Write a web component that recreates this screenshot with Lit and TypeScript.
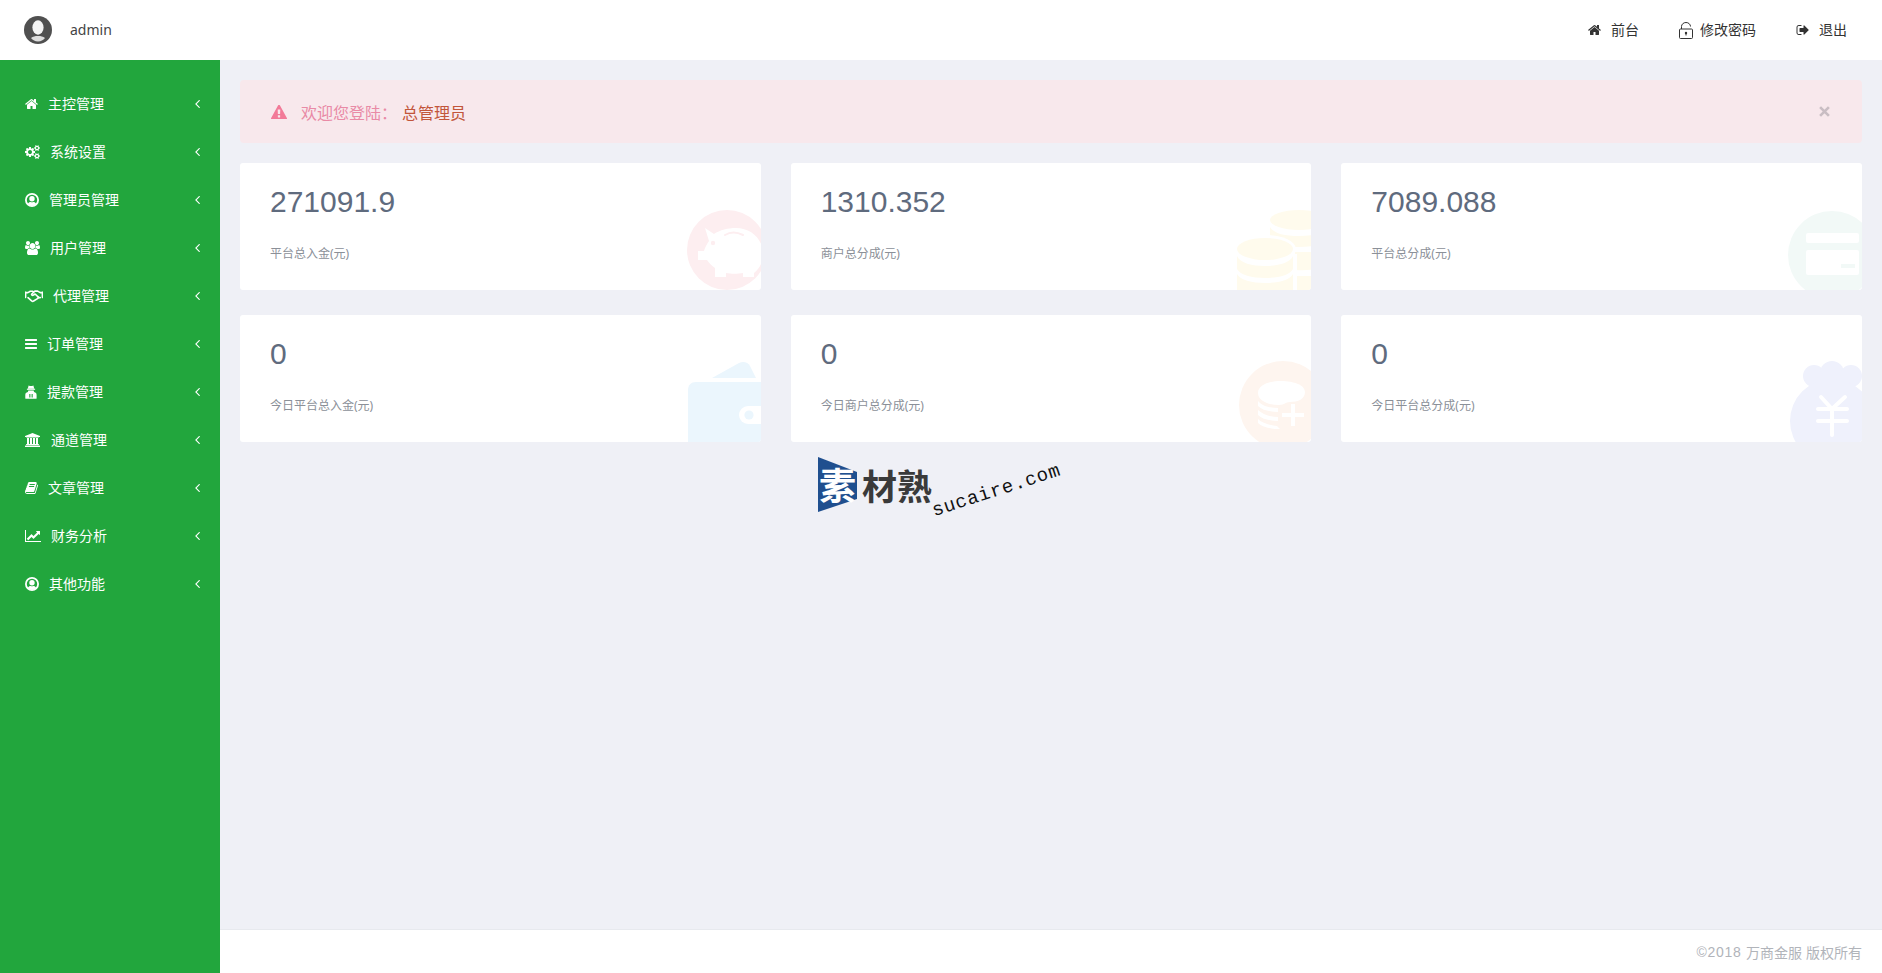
import { LitElement, html, css, svg } from "lit";
import { customElement } from "lit/decorators.js";

const P = {
  home: "M1472 992v480q0 26-19 45t-45 19h-384v-384h-256v384h-384q-26 0-45-19t-19-45v-480q0-1 .5-3t.5-3l575-474 575 474q1 2 1 6zm223-69l-62 74q-8 9-21 11h-3q-13 0-21-7l-692-577-692 577q-12 8-24 7-13-2-21-11l-62-74q-8-10-7-23.5t11-21.5l719-599q32-26 76-26t76 26l244 204v-195q0-14 9-23t23-9h192q14 0 23 9t9 23v408l219 182q10 8 11 21.5t-7 23.5z",
  cogs: "M896 896q0-106-75-181t-181-75-181 75-75 181 75 181 181 75 181-75 75-181zm768 512q0-52-38-90t-90-38-90 38-38 90q0 53 37.5 90.5t90.5 37.5 90.5-37.5 37.5-90.5zm0-1024q0-52-38-90t-90-38-90 38-38 90q0 53 37.5 90.5t90.5 37.5 90.5-37.5 37.5-90.5zm-384 421v185q0 10-7 19.5t-16 10.5l-155 24q-11 35-32 76 34 48 90 115 7 11 7 20 0 12-7 19-23 30-82.5 89.5t-78.5 59.5q-11 0-21-7l-115-90q-37 19-77 31-11 108-23 155-7 24-30 24h-186q-11 0-20-7.5t-10-17.5l-23-153q-34-10-75-31l-118 89q-7 7-20 7-11 0-21-8-144-133-144-160 0-9 7-19 10-14 41-53t47-61q-23-44-35-82l-152-24q-10-1-17-9.5t-7-19.5v-185q0-10 7-19.5t16-10.5l155-24q11-35 32-76-34-48-90-115-7-11-7-20 0-12 7-20 22-30 82-89t79-59q11 0 21 7l115 90q34-18 77-32 11-108 23-154 7-24 30-24h186q11 0 20 7.5t10 17.5l23 153q34 10 75 31l118-89q8-7 20-7 11 0 21 8 144 133 144 160 0 8-7 19-12 16-42 54t-45 60q23 48 34 82l152 23q10 2 17 10.5t7 19.5zm640 533v140q0 16-149 31-12 27-30 52 51 113 51 138 0 4-4 7-122 71-124 71-8 0-46-47t-52-68q-20 2-30 2t-30-2q-14 21-52 68t-46 47q-2 0-124-71-4-3-4-7 0-25 51-138-18-25-30-52-149-15-149-31v-140q0-16 149-31 13-29 30-52-51-113-51-138 0-4 4-7 4-2 35-20t59-34 30-16q8 0 46 46.5t52 67.5q20-2 30-2t30 2q51-71 92-112l6-2q4 0 124 70 4 3 4 7 0 25-51 138 17 23 30 52 149 15 149 31zm0-1024v140q0 16-149 31-12 27-30 52 51 113 51 138 0 4-4 7-122 71-124 71-8 0-46-47t-52-68q-20 2-30 2t-30-2q-14 21-52 68t-46 47q-2 0-124-71-4-3-4-7 0-25 51-138-18-25-30-52-149-15-149-31v-140q0-16 149-31 13-29 30-52-51-113-51-138 0-4 4-7 4-2 35-20t59-34 30-16q8 0 46 46.5t52 67.5q20-2 30-2t30 2q51-71 92-112l6-2q4 0 124 70 4 3 4 7 0 25-51 138 17 23 30 52 149 15 149 31z",
  users: "M593 896q-162 5-265 128h-134q-82 0-138-40.5t-56-118.5q0-353 124-353 6 0 43.5 21t97.5 42.5 119 21.5q67 0 133-23-5 37-5 66 0 139 81 256zm1071 637q0 120-73 189.5t-194 69.5h-874q-121 0-194-69.5t-73-189.5q0-53 3.5-103.5t14-109 26.5-108.5 43-97.5 62-81 85.5-53.5 111.5-20q10 0 43 21.5t73 48 107 48 135 21.5 135-21.5 107-48 73-48 43-21.5q61 0 111.5 20t85.5 53.5 62 81 43 97.5 26.5 108.5 14 109 3.5 103.5zm-1024-1277q0 106-75 181t-181 75-181-75-75-181 75-181 181-75 181 75 75 181zm704 384q0 159-112.5 271.5t-271.5 112.5-271.5-112.5-112.5-271.5 112.5-271.5 271.5-112.5 271.5 112.5 112.5 271.5zm576 225q0 78-56 118.5t-138 40.5h-134q-103-123-265-128 81-117 81-256 0-29-5-66 66 23 133 23 59 0 119-21.5t97.5-42.5 43.5-21q124 0 124 353zm-128-609q0 106-75 181t-181 75-181-75-75-181 75-181 181-75 181 75 75 181z",
  bars: "M1664 1344v128q0 26-19 45t-45 19h-1408q-26 0-45-19t-19-45v-128q0-26 19-45t45-19h1408q26 0 45 19t19 45zm0-512v128q0 26-19 45t-45 19h-1408q-26 0-45-19t-19-45v-128q0-26 19-45t45-19h1408q26 0 45 19t19 45zm0-512v128q0 26-19 45t-45 19h-1408q-26 0-45-19t-19-45v-128q0-26 19-45t45-19h1408q26 0 45 19t19 45z",
  bank: "M960 0l960 384v128h-128q0 26-20.5 45t-48.5 19h-1526q-28 0-48.5-19t-20.5-45h-128v-128zm-704 640h256v768h128v-768h256v768h128v-768h256v768h128v-768h256v768h59q28 0 48.5 19t20.5 45v64h-1664v-64q0-26 20.5-45t48.5-19h59v-768zm1595 960q28 0 48.5 19t20.5 45v128h-1920v-128q0-26 20.5-45t48.5-19h1782z",
  book: "M1639 478q40 57 18 129l-275 906q-19 64-76.5 107.5t-122.5 43.5h-923q-77 0-148.5-53.5t-99.5-131.5q-24-67-2-127 0-4 3-27t4-37q1-8-3-21.5t-3-19.5q2-11 8-21t16.5-23.5 16.5-23.5q23-38 45-91.5t30-91.5q3-10 .5-30t-.5-28q3-11 17-28t17-23q21-36 42-92t25-90q1-9-2.5-32t.5-28q4-13 22-30.5t22-22.5q19-26 42.5-84.5t27.5-96.5q1-8-3-25.5t-2-26.5q2-8 9-18t18-23 17-21q8-12 16.5-30.5t15-35 16-36 19.5-32 26.5-23.5 36-11.5 47.5 5.5l-1 3q38-9 51-9h761q74 0 114 56t18 130l-274 906q-36 119-71.5 153.5t-128.5 34.5h-869q-27 0-38 15-11 16-1 43 24 70 144 70h923q29 0 56-15.5t35-41.5l300-987q7-22 5-57 38 15 59 43zm-1064 2q-4 13 2 22.5t20 9.5h608q13 0 25.5-9.5t16.5-22.5l21-64q4-13-2-22.5t-20-9.5h-608q-13 0-25.5 9.5t-16.5 22.5zm-83 256q-4 13 2 22.5t20 9.5h608q13 0 25.5-9.5t16.5-22.5l21-64q4-13-2-22.5t-20-9.5h-608q-13 0-25.5 9.5t-16.5 22.5z",
  chart: "M2048 1536v128h-2048v-1536h128v1408h1920zm-128-1248v435q0 21-19.5 29.5t-35.5-7.5l-121-121-633 633q-10 10-23 10t-23-10l-233-233-416 416-192-192 585-585q10-10 23-10t23 10l233 233 464-464-121-121q-16-16-7.5-35.5t29.5-19.5h435q14 0 23 9t9 23z",
  warning: "M1024 1375v-190q0-14-9.5-23.5t-22.5-9.5h-192q-13 0-22.5 9.5t-9.5 23.5v190q0 14 9.5 23.5t22.5 9.5h192q13 0 22.5-9.5t9.5-23.5zm-2-374l18-459q0-12-10-19-13-11-24-11h-220q-11 0-24 11-10 7-10 21l17 457q0 10 10 16.5t24 6.5h185q14 0 23.5-6.5t10.5-16.5zm-14-934l768 1408q35 63-2 126-17 29-46.5 46t-63.5 17h-1536q-34 0-63.5-17t-46.5-46q-37-63-2-126l768-1408q17-31 47-49t65-18 65 18 47 49z",
  signOut: "M704 1440q0 4 1 20t.5 26.5-3 23.5-10 19.5-20.5 6.5h-320q-119 0-203.5-84.5t-84.5-203.5v-704q0-119 84.5-203.5t203.5-84.5h320q13 0 22.5 9.5t9.5 22.5q0 4 1 20t.5 26.5-3 23.5-10 19.5-20.5 6.5h-320q-66 0-113 47t-47 113v704q0 66 47 113t113 47h312l11.5 1 11.5 3 8 5.5 7 9 2 13.5zm928-544q0 26-19 45l-544 544q-19 19-45 19t-45-19-19-45v-288h-448q-26 0-45-19t-19-45v-384q0-26 19-45t45-19h448v-288q0-26 19-45t45-19 45 19l544 544q19 19 19 45z",
  angle: "M1203 544q0 13-10 23l-393 393 393 393q10 10 10 23t-10 23l-50 50q-10 10-23 10t-23-10l-466-466q-10-10-10-23t10-23l466-466q10-10 23-10t23 10l50 50q10 10 10 23z",
};

const fa = (d: string, vb: string, w: number, h = 14) =>
  html`<svg class="ic" width=${w} height=${h} viewBox=${vb} fill="currentColor"><path d=${d}></path></svg>`;

const userCircle = html`<svg class="ic" width="14" height="14" viewBox="0 0 14 14" fill="currentColor">
  <circle cx="7" cy="7" r="6.1" fill="none" stroke="currentColor" stroke-width="1.8"></circle>
  <circle cx="7" cy="5.7" r="2.7"></circle>
  <path d="M2.600 11.200c.8-1.700 2-2.300 2.900-2.300.5.300 1 .4 1.500.4s1-.1 1.500-.4c.9 0 2.100.6 2.900 2.300L7 13z"></path>
</svg>`;

const handshake = html`<svg class="ic" width="18" height="14" viewBox="0 0 18 14" fill="none" stroke="currentColor" stroke-width="1.6" stroke-linejoin="round" stroke-linecap="round">
  <path d="M.4 3.600h2.500l2.400-1.400h2.200l1.200.8M17.600 3.600h-2.400l-2.500-1.500H9.900L6.800 5c-.7.8.6 1.800 1.500 1.200l1.800-1.200 3.800 3.600h1.400"></path>
  <path d="M3 8.700l3.600 3.200c.8.6 1.500.5 2 .1l4.300-2.600c.9-.7.3-1.600-.3-1.600"></path>
  <path d="M.4 3.600v4.600M17.600 3.600v4.600" stroke-width="2"></path>
</svg>`;

const secret = html`<svg class="ic" width="12" height="14" viewBox="0 0 12 14" fill="currentColor">
  <path d="M3.600 .6l1.300.5h2.200l1.300-.5.8 3.200H2.800z"></path>
  <rect x="1.900" y="3.700" width="8.200" height="1.100"></rect>
  <path d="M3.300 5.400h5.400l.3 1.600c1.800.4 2.600 1.300 2.600 3v3.200c0 .4-.3.6-.6.6H.9c-.3 0-.6-.2-.6-.6V10c0-1.700.8-2.600 2.600-3z"></path>
  <rect x="4.300" y="9" width="1.100" height="3.500" fill="#22a63d"></rect>
  <rect x="6.600" y="9" width="1.100" height="3.500" fill="#22a63d"></rect>
</svg>`;

const MENU = [
  { icon: fa(P.home, "64 0 1664 1792", 13), label: "主控管理" },
  { icon: fa(P.cogs, "0 0 1920 1792", 15), label: "系统设置" },
  { icon: userCircle, label: "管理员管理" },
  { icon: fa(P.users, "0 0 1920 1792", 15), label: "用户管理" },
  { icon: handshake, label: "代理管理" },
  { icon: fa(P.bars, "128 0 1536 1792", 12), label: "订单管理" },
  { icon: secret, label: "提款管理" },
  { icon: fa(P.bank, "0 0 2048 1792", 16), label: "通道管理" },
  { icon: fa(P.book, "0 0 1664 1792", 13), label: "文章管理" },
  { icon: fa(P.chart, "0 0 2048 1792", 16), label: "财务分析" },
  { icon: userCircle, label: "其他功能" },
];

const pig = svg`<circle cx="46" cy="40" r="40" fill="#fdeef0"></circle>
  <path fill="#fff" d="M24 18l9 6c6-4 14-6 22-6 15 0 27 11 27 26 0 8-3 14-9 19v4H62v-4c-5 1-12 1-17 0v4H34v-9c-4-3-6-5-8-8h-9V41h6c1-4 3-7 5-10z"></path>
  <circle cx="32" cy="33" r="2.200" fill="#fdeef0"></circle>
  <path d="M44 25c5-3 12-3 18 0" stroke="#fdeef0" stroke-width="2" fill="none" stroke-linecap="round"></path>`;

const coins = svg`<g fill="#fffbed">
  <ellipse cx="68" cy="10" rx="29" ry="10"></ellipse>
  <path d="M39 17c4 7 16 9 29 9s25-2 29-9v12c-4 6-16 8-29 8s-25-2-29-8z"></path>
  <path d="M64 42h33v13c-4 4-20 6-33 5zM64 66h33v14H64z"></path>
  </g>
  <ellipse cx="34" cy="39" rx="31" ry="14" fill="#fff"></ellipse>
  <path d="M62 44h4v36h-4z" fill="#fff"></path>
  <g fill="#fffbed">
  <ellipse cx="34" cy="39" rx="28" ry="11"></ellipse>
  <path d="M6 46c3 7 15 10 28 10s25-3 28-10v13c-3 6-15 9-28 9s-25-3-28-9z"></path>
  <path d="M6 64c3 6 15 9 28 9s25-3 28-9v16H6z"></path>
  </g>`;

const card = svg`<circle cx="50" cy="45" r="44" fill="#f2f9f7"></circle>
  <rect x="24" y="23" width="53" height="10" rx="2" fill="#fff"></rect>
  <rect x="24" y="40" width="53" height="25" rx="2" fill="#fff"></rect>
  <rect x="59" y="54" width="14" height="4" fill="#f2f9f7"></rect>`;

const wallet = svg`<path d="M31 16L58 1c4-2 9-1 11 3l6 12z" fill="#ebf6fd"></path>
  <path d="M7 28c0-5 3-8 8-8h65v60H7z" fill="#ebf6fd"></path>
  <path d="M80 44H67a9 9 0 0 0 0 18h13z" fill="#fff"></path>
  <circle cx="68" cy="53" r="4.600" fill="#ebf6fd"></circle>`;

const stack = svg`<circle cx="52" cy="44" r="44" fill="#fef5ef"></circle>
  <path fill="#fff" d="M50 20c13 0 24 4 24 11s-7 10-15 10c-5 0-5 3-11 3-12 0-21-5-21-12 0-8 11-12 23-12z"></path>
  <path fill="#fff" d="M27 40c4 5 12 7 20 7v4c-8 0-16-2-20-6zM27 49c4 4 12 7 20 7v4c-8 0-16-2-20-6zM27 58c4 4 11 6 19 7l3 3c-9 0-18-2-22-6z"></path>
  <path d="M51 54h22M62 43v22" stroke="#fff" stroke-width="4"></path>`;

const bag = svg`<g fill="#eff1fc"><circle cx="32" cy="15" r="11"></circle><circle cx="50" cy="12" r="12"></circle><circle cx="69" cy="15" r="11"></circle>
  <path d="M36 24h30v6H36z"></path><circle cx="50" cy="60" r="42"></circle></g>
  <path d="M39 36l11 12 13-12M36 48h29M36 60h29M50 48v26" stroke="#fff" stroke-width="4" fill="none" stroke-linecap="round"></path>`;

const STATS = [
  { v: "271091.9", l: "平台总入金(元)", a: pig, h: 80 },
  { v: "1310.352", l: "商户总分成(元)", a: coins, h: 80 },
  { v: "7089.088", l: "平台总分成(元)", a: card, h: 80 },
  { v: "0", l: "今日平台总入金(元)", a: wallet, h: 80 },
  { v: "0", l: "今日商户总分成(元)", a: stack, h: 81 },
  { v: "0", l: "今日平台总分成(元)", a: bag, h: 81 },
];

@customElement("app-root")
export class AppRoot extends LitElement {
  static styles = css`
    :host {
      display: flex;
      flex-direction: column;
      min-height: 100vh;
      background: #eff0f6;
      font-family: "Noto Sans", "Noto Sans CJK SC", "Liberation Sans", sans-serif;
      font-size: 14px;
      color: #333;
    }
    .ic { flex: none; display: block; }
    .up { padding-bottom: 2px; }
    .top {
      height: 60px;
      background: #fff;
      display: flex;
      align-items: center;
      padding: 0 35px 0 24px;
    }
    .avatar { display: block; flex: none; }
    .name { margin-left: 18px; color: #444; }
    .links { margin-left: auto; display: flex; align-items: center; gap: 40px; }
    .link { display: flex; align-items: center; gap: 10px; color: #333; }
    .link .lock { margin-right: -3px; }
    .body { flex: 1; display: flex; }
    .side {
      width: 220px;
      flex: none;
      background: #22a63d;
      color: #fff;
      padding-top: 20px;
    }
    .item {
      height: 48px;
      display: flex;
      align-items: center;
      gap: 10px;
      padding: 0 20px 0 25px;
    }
    .item .chev { margin-left: auto; }
    .main { flex: 1; display: flex; flex-direction: column; position: relative; min-width: 0; }
    .content { flex: 1; padding: 20px 20px 0; }
    .alert {
      height: 63px;
      background: #f8e8ec;
      border-radius: 4px;
      display: flex;
      align-items: center;
      padding: 0 32px 0 31px;
      font-size: 16px;
      color: #e98aa6;
      margin-bottom: 20px;
    }
    .alert .warn { color: #f27a98; margin-right: 14px; }
    .alert b { font-weight: 400; color: #c2553a; margin-left: 5px; }
    .alert .x { margin-left: auto; }
    .grid {
      display: grid;
      grid-template-columns: repeat(3, 1fr);
      gap: 25px 30px;
    }
    .card {
      height: 127px;
      background: #fff;
      border-radius: 3px;
      padding: 22px 30px 0;
      box-sizing: border-box;
      position: relative;
      overflow: hidden;
    }
    .num {
      font-family: "Liberation Sans", Arial, sans-serif;
      font-size: 30px;
      line-height: 34px;
      color: #5f6b7e;
    }
    .lab {
      margin-top: 26px;
      font-size: 12px;
      line-height: 18px;
      color: #8b9098;
    }
    .art { position: absolute; right: 0; bottom: 0; display: block; }
    .foot {
      height: 43px;
      flex: none;
      background: #fff;
      border-top: 1px solid #e7e9ee;
      display: flex;
      align-items: center;
      justify-content: flex-end;
      padding: 0 20px;
      color: #b1b4ba;
      font-family: "Liberation Sans", "Noto Sans CJK SC", sans-serif;
      white-space: pre;
    }
    .yr { letter-spacing: 0.7px; }
    .wm { position: absolute; left: 598px; top: 397px; display: flex; align-items: center; }
    .mark { position: relative; width: 39px; height: 55px; }
    .mark svg { position: absolute; inset: 0; display: block; }
    .mark span {
      position: absolute;
      left: 1px;
      top: 4px;
      font: 700 37px/46px "Noto Sans CJK SC", sans-serif;
      color: #fff;
    }
    .wt { margin-left: 5px; font: 700 35px/40px "Noto Sans CJK SC", sans-serif; color: #3a3a3a; }
    .url {
      position: absolute;
      left: 118px;
      top: 43px;
      font: 400 19px/22px "Liberation Mono", monospace;
      letter-spacing: 0.8px;
      color: #111;
      transform: rotate(-18deg);
      transform-origin: left bottom;
      white-space: nowrap;
    }
  `;

  render() {
    return html`
      <div class="top">
        <svg class="avatar" width="28" height="28" viewBox="0 0 28 28">
          <circle cx="14" cy="14" r="14" fill="#505050"></circle>
          <ellipse cx="14" cy="11.500" rx="5.600" ry="7.200" fill="#f4f4f4"></ellipse>
          <path d="M7 22c2-1.600 4-2 7-2s5 .4 7 2c-1.800 2.200-4 3.400-7 3.400S8.800 24.200 7 22z" fill="#ddd"></path>
        </svg>
        <span class="name up">admin</span>
        <div class="links">
          <div class="link">${fa(P.home, "64 0 1664 1792", 13)}<span class="up">前台</span></div>
          <div class="link">
            <svg class="ic lock" width="14" height="17" viewBox="0 0 14 17" fill="none" stroke="currentColor" stroke-width="1">
              <rect x=".5" y="7" width="13" height="9.500" rx="1"></rect>
              <path d="M2.500 7V4.500a4.500 4 0 0 1 9 0"></path>
              <circle cx="7" cy="11" r="1.200" fill="currentColor" stroke="none"></circle>
              <path d="M7 11v2.500"></path>
            </svg>
            <span class="up">修改密码</span>
          </div>
          <div class="link">${fa(P.signOut, "0 0 1664 1792", 13)}<span class="up">退出</span></div>
        </div>
      </div>
      <div class="body">
        <nav class="side">
          ${MENU.map(
            (m) => html`<div class="item">
              ${m.icon}<span class="up">${m.label}</span>
              <svg class="ic chev" width="5" height="8" viewBox="595 464 608 992" fill="currentColor"><path d=${P.angle}></path></svg>
            </div>`
          )}
        </nav>
        <div class="main">
          <div class="content">
            <div class="alert">
              <svg class="ic warn" width="16" height="14" viewBox="0 0 1792 1568" fill="currentColor"><path d=${P.warning} transform="translate(0 -16)"></path></svg>
              <span>欢迎您登陆：</span><b>总管理员</b>
              <svg class="ic x" width="11" height="11" viewBox="0 0 10 10" stroke="#c9bdc3" stroke-width="2.400"><path d="M1 1l8 8M9 1l-8 8"></path></svg>
            </div>
            <div class="grid">
              ${STATS.map(
                (s) => html`<div class="card">
                  <div class="num">${s.v}</div>
                  <div class="lab">${s.l}</div>
                  <svg class="art" width="80" height=${s.h} viewBox="0 0 80 ${s.h}">${s.a}</svg>
                </div>`
              )}
            </div>
          </div>
          <div class="foot"><span class="yr">©2018 </span><span>万商金服 版权所有</span></div>
          <div class="wm">
            <div class="mark">
              <svg width="39" height="55" viewBox="0 0 39 55"><path d="M0 0l39 15v27L0 55z" fill="#1f4f8f"></path></svg>
              <span>素</span>
            </div>
            <div class="wt">材熟</div>
            <div class="url">sucaire.com</div>
          </div>
        </div>
      </div>
    `;
  }
}
